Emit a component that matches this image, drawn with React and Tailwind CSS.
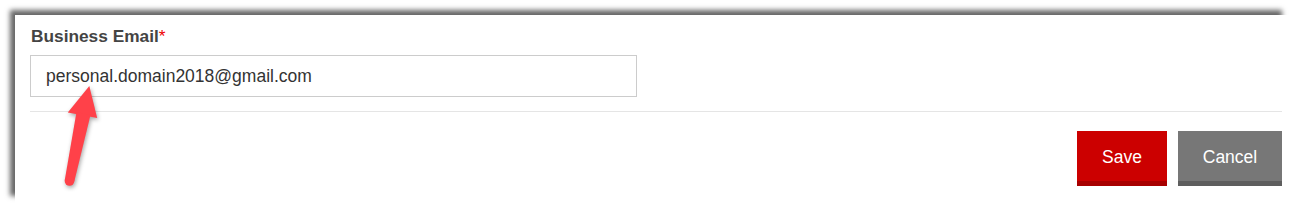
import React from 'react';

const font = { fontFamily: '"Liberation Sans", Arial, sans-serif' };

function Arrow() {
    return (
        <svg
            className="absolute left-[55px] top-[80px] pointer-events-none"
            width="55"
            height="110"
            viewBox="0 0 55 110"
            style={{ filter: 'drop-shadow(1px 2px 2px rgba(0,0,0,0.35))' }}
        >
            <polygon points="34.3,6 12.8,32.5 42.2,38" fill="#ff4149" />
            <polygon points="21.5,32 35.5,35 19.3,101.5 9.7,100.5" fill="#ff4149" />
            <circle cx="14.5" cy="101" r="4.8" fill="#ff4149" />
        </svg>
    );
}

export default function App() {
    return (
        <div className="relative w-[1295px] h-[209px] bg-white pt-[15px] pl-[15px]" style={font}>
            {/* screenshot frame */}
            <div className="w-[1274px] h-[188px] bg-white pt-[11px] pl-[15px] shadow-[-6px_-6px_5px_-1px_rgba(0,0,0,0.6)]">
                <div className="w-[1252px]">
                    <label className="block pl-[1px] text-[17.3px] leading-[20px] font-bold text-[#444]">
                        Business Email<span className="text-[#e00] font-normal">*</span>
                    </label>
                    <div className="mt-[9px] w-[607px] h-[42px] border border-[#ccc] flex items-center pl-[15px] text-[17.5px] text-[#333]">
                        personal.domain2018@gmail.com
                    </div>
                    <div className="mt-[14px] h-px bg-[#e5e5e5]"></div>
                    <div className="mt-[19px] flex justify-end gap-[11px]">
                        <button className="w-[90px] h-[55px] flex items-center justify-center pt-[3px] bg-[#cc0000] border-b-[5px] border-[#a80000] text-white text-[17.5px]">
                            Save
                        </button>
                        <button className="w-[104px] h-[55px] flex items-center justify-center pt-[3px] bg-[#777] border-b-[5px] border-[#5e5e5e] text-white text-[17.5px]">
                            Cancel
                        </button>
                    </div>
                </div>
            </div>
            <Arrow />
        </div>
    );
}
